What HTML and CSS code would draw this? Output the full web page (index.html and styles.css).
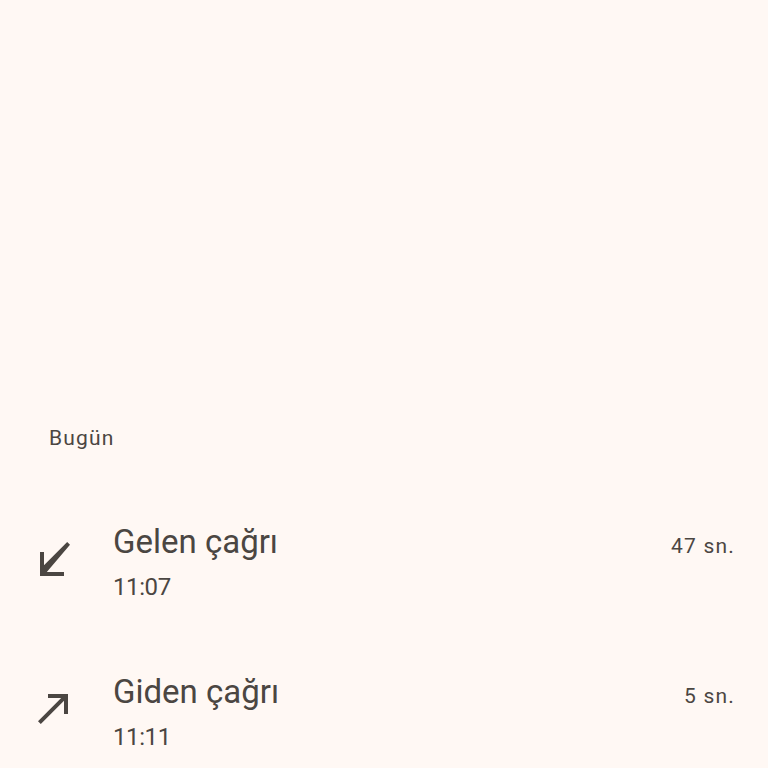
FILE: index.html
```html
<!DOCTYPE html>
<html lang="tr">
	<head>
		<meta charset="utf-8" />
		<meta name="viewport" content="width=device-width, initial-scale=1" />
		<title>Arama geçmişi</title>
		<link rel="stylesheet" href="styles.css">
	</head>
	<body>
		<main class="history">
			<h2 class="day">Bugün</h2>

			<ul class="calls">
				<li class="call">
					<svg class="call-icon" viewBox="0 0 24 24" aria-hidden="true">
						<path d="M20 5.41L18.59 4 7 15.59V9H5v12h12v-2H8.41z" />
					</svg>
					<div class="call-text">
						<p class="call-line">
							<span class="call-title">Gelen çağrı</span>
							<span class="call-length">47 sn.</span>
						</p>
						<p class="call-time">11:07</p>
					</div>
				</li>

				<li class="call">
					<svg class="call-icon" viewBox="0 0 24 24" aria-hidden="true">
						<path d="M9 5v2h6.59L4 18.59 5.41 20 17 8.41V15h2V5z" />
					</svg>
					<div class="call-text">
						<p class="call-line">
							<span class="call-title">Giden çağrı</span>
							<span class="call-length">5 sn.</span>
						</p>
						<p class="call-time">11:11</p>
					</div>
				</li>
			</ul>
		</main>
	</body>
</html>
```

FILE: styles.css
```css
:root {
	--bg: #fff8f4;
	--ink: #4b4642;
	font-family: Roboto, "Noto Sans", sans-serif;
}

* {
	margin: 0;
	padding: 0;
	box-sizing: border-box;
}
html,
body {
	background: var(--bg);
	color: var(--ink);
	overflow: hidden;
}
.history {
	padding-top: 426px;
}
.day {
	font-size: 21px;
	font-weight: 400;
	line-height: 24px;
	letter-spacing: 1.2px;
	padding-left: 49px;
}
.calls {
	list-style: none;
	display: flex;
	flex-direction: column;
	gap: 67px;
	padding: 72px 33px 0 30px;
}
.call {
	display: flex;
	align-items: flex-start;
	gap: 35px;
}
.call-icon {
	width: 48px;
	height: 48px;
	margin-top: 12px;
	fill: var(--ink);
	flex: none;
}
.call-text {
	flex: 1;
}
.call-line {
	display: flex;
	justify-content: space-between;
	align-items: baseline;
}
.call-title {
	font-size: 33px;
	line-height: 40px;
}
.call-length {
	font-size: 21px;
	letter-spacing: 1.2px;
}
.call-time {
	font-size: 24px;
	line-height: 36px;
	letter-spacing: -0.4px;
	margin-top: 7px;
}
```
